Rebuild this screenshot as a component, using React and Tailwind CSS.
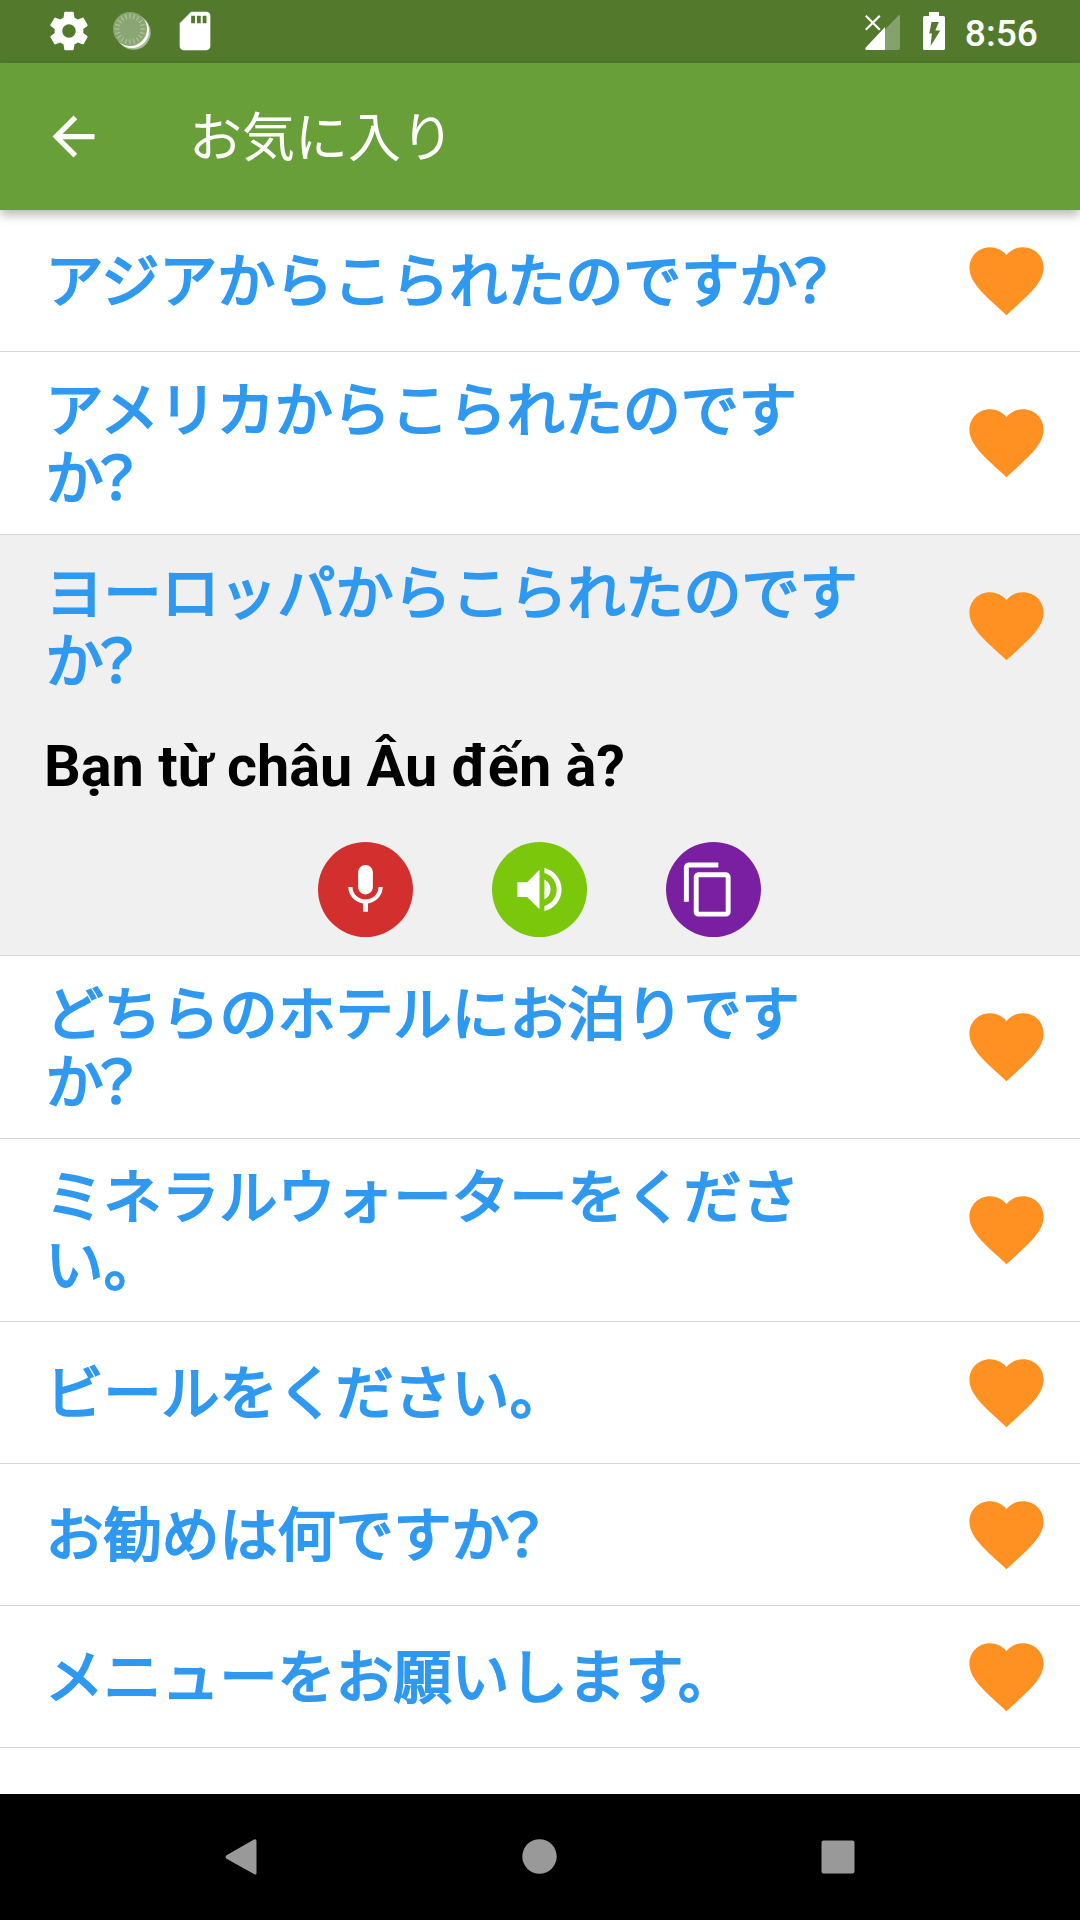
const HEART =
  "M12 21.35l-1.45-1.32C5.4 15.36 2 12.28 2 8.5 2 5.42 4.42 3 7.5 3c1.74 0 3.41.81 4.5 2.09C13.09 3.81 14.76 3 16.5 3 19.58 3 22 5.42 22 8.5c0 3.78-3.4 6.86-8.55 11.54L12 21.35z";
const MIC =
  "M12 14c1.66 0 2.99-1.34 2.99-3L15 5c0-1.66-1.34-3-3-3S9 3.34 9 5v6c0 1.66 1.34 3 3 3zm5.3-3c0 3-2.54 5.1-5.3 5.1S6.7 14 6.7 11H5c0 3.41 2.72 6.23 6 6.72V21h2v-3.28c3.28-.48 6-3.3 6-6.72h-1.7z";
const VOLUME =
  "M3 9v6h4l5 5V4L7 9H3zm13.5 3c0-1.77-1.02-3.29-2.5-4.03v8.05c1.48-.73 2.5-2.25 2.5-4.02zM14 3.23v2.06c2.89.86 5 3.54 5 6.71s-2.11 5.85-5 6.71v2.06c4.01-.91 7-4.49 7-8.77s-2.99-7.86-7-8.77z";
const COPY =
  "M16 1H4c-1.1 0-2 .9-2 2v14h2V3h12V1zm3 4H8c-1.1 0-2 .9-2 2v14c0 1.1.9 2 2 2h11c1.1 0 2-.9 2-2V7c0-1.1-.9-2-2-2zm0 16H8V7h11v14z";
const GEAR =
  "M19.43 12.98c.04-.32.07-.64.07-.98s-.03-.66-.07-.98l2.11-1.65c.19-.15.24-.42.12-.64l-2-3.46c-.12-.22-.39-.3-.61-.22l-2.49 1c-.52-.4-1.08-.73-1.69-.98l-.38-2.65C14.46 2.18 14.25 2 14 2h-4c-.25 0-.46.18-.49.42l-.38 2.65c-.61.25-1.17.59-1.69.98l-2.49-1c-.23-.09-.49 0-.61.22l-2 3.46c-.13.22-.07.49.12.64l2.11 1.65c-.04.32-.07.65-.07.98s.03.66.07.98l-2.11 1.65c-.19.15-.24.42-.12.64l2 3.46c.12.22.39.3.61.22l2.49-1c.52.4 1.08.73 1.69.98l.38 2.65c.03.24.24.42.49.42h4c.25 0 .46-.18.49-.42l.38-2.65c.61-.25 1.17-.59 1.69-.98l2.49 1c.23.09.49 0 .61-.22l2-3.46c.12-.22.07-.49-.12-.64l-2.11-1.65zM12 15.5c-1.93 0-3.5-1.57-3.5-3.5s1.57-3.5 3.5-3.5 3.5 1.57 3.5 3.5-1.57 3.5-3.5 3.5z";
const SD_CARD =
  "M18 2h-8L4.02 8 4 20c0 1.1.9 2 2 2h12c1.1 0 2-.9 2-2V4c0-1.1-.9-2-2-2zm-6 6h-2V4h2v4zm3 0h-2V4h2v4zm3 0h-2V4h2v4z";
const BACK = "M20 11H7.83l5.59-5.59L12 4l-8 8 8 8 1.41-1.41L7.83 13H20v-2z";

const TICKS = Array.from({ length: 20 }, (_, i) => i * 18);

function Icon({ d, className }) {
  return (
    <svg viewBox="0 0 24 24" fill="currentColor" className={className}>
      <path d={d} />
    </svg>
  );
}

function StatusBar() {
  return (
    <div className="flex h-[63px] items-start justify-between bg-[#52792c] pr-[42px] pl-[45px] text-white">
      <div className="flex pt-[8px]">
        <Icon d={GEAR} className="ml-[0.5px] h-[46px] w-[46px]" />
        <svg viewBox="0 0 38 38" className="mt-[4px] ml-[21px] h-[38px] w-[38px]">
          <circle cx="20.500" cy="20.500" r="17.200" fill="#a9bf96" />
          <circle cx="19" cy="19" r="17" fill="#fff" />
          <circle cx="17" cy="17" r="17" fill="#8ba673" />
          <g stroke="#b4c6a4" strokeWidth="1">
            {TICKS.map((a) => (
              <line key={a} x1="17" y1="1.5" x2="17" y2="6.5" transform={`rotate(${a} 17 17)`} />
            ))}
          </g>
        </svg>
        <Icon d={SD_CARD} className="ml-[21px] h-[46px] w-[46px]" />
      </div>
      <div className="flex">
        <svg viewBox="0 0 36 36" className="mt-[14px] h-[36px] w-[36px]">
          <path d="M35 2v32q0 2-2 2H20V15.500L33.500 1.500Q35 .5 35 2z" fill="#86a26c" />
          <path d="M20 13v23H1.500Q-.5 36 .8 33.500L20 13z" fill="#fff" />
          <path d="M.8 1.800l14 14M14.800 1.800l-14 14" stroke="#fff" strokeWidth="2.200" fill="none" />
        </svg>
        <svg viewBox="0 0 22 38" className="mt-[12px] ml-[22px] h-[38px] w-[22px]">
          <path
            fill="#fff"
            fillRule="evenodd"
            d="M6 0h10v4h4.500Q22 4 22 5.500v31q0 1.500-1.500 1.500h-19Q0 38 0 36.500v-31Q0 4 1.500 4H6zM8.500 10L6.300 21.500h2.600L7.600 34 17.300 18.500h-5L15.800 10z"
          />
        </svg>
        <span className="mt-[10px] ml-[20px] text-[37.2px] leading-[46px] font-medium">8:56</span>
      </div>
    </div>
  );
}

function AppBar() {
  return (
    <header className="relative flex h-[147px] items-center bg-[#689f38] pl-[42px] text-white shadow-[0_5px_10px_rgba(0,0,0,0.28)]">
      <Icon d={BACK} className="h-[63px] w-[63px]" />
      <h1 className="mt-[5px] ml-[84px] text-[53px] leading-[62px] font-normal">お気に入り</h1>
    </header>
  );
}

function Phrase({ text, question, tall }) {
  return (
    <div className="flex items-center justify-between pr-[29px] pl-[45.6px]">
      <p
        className={
          tall
            ? "h-[182px] w-[820px] pt-[20px] font-['Noto_Sans_CJK_JP',sans-serif] text-[58px] leading-[68px] text-[#2f99f1] [-webkit-text-stroke:2.2px_#2f99f1]"
            : "h-[141px] w-[820px] pt-[33px] font-['Noto_Sans_CJK_JP',sans-serif] text-[58px] leading-[68px] text-[#2f99f1] [-webkit-text-stroke:2.2px_#2f99f1]"
        }
      >
        {text}
        {question && <span className="-ml-[8px] [font-feature-settings:'palt']">？</span>}
      </p>
      <Icon
        d={HEART}
        className={
          tall
            ? "mb-px h-[89px] w-[89px] shrink-0 text-[#ff9122]"
            : "h-[89px] w-[89px] shrink-0 text-[#ff9122]"
        }
      />
    </div>
  );
}

function Actions() {
  return (
    <div className="flex justify-center gap-[79px] pr-px">
      <button className="flex h-[95px] w-[95px] items-center justify-center rounded-full bg-[#d32f2f]">
        <Icon d={MIC} className="h-[59px] w-[59px]" />
      </button>
      <button className="flex h-[95px] w-[95px] items-center justify-center rounded-full bg-[#7ac70c]">
        <Icon d={VOLUME} className="h-[59px] w-[59px]" />
      </button>
      <button className="flex h-[95px] w-[95px] items-center justify-center rounded-full bg-[#7b1fa2] pr-[10px]">
        <Icon d={COPY} className="h-[59px] w-[59px] shrink-0" />
      </button>
    </div>
  );
}

const ROWS = [
  { text: "アジアからこられたのですか", question: true },
  { text: "アメリカからこられたのですか", question: true, tall: true },
  {
    text: "ヨーロッパからこられたのですか",
    question: true,
    tall: true,
    translation: "Bạn từ châu Âu đến à?",
  },
  { text: "どちらのホテルにお泊りですか", question: true, tall: true },
  { text: "ミネラルウォーターをください。", tall: true },
  { text: "ビールをください。" },
  { text: "お勧めは何ですか", question: true },
  { text: "メニューをお願いします。" },
];

export default function App() {
  return (
    <div
      lang="ja"
      className="flex h-[1920px] w-[1080px] flex-col overflow-hidden bg-white font-[Roboto,'Noto_Sans_CJK_JP',sans-serif]"
    >
      <StatusBar />
      <AppBar />
      <ul className="flex-1">
        {ROWS.map((row) =>
          row.translation ? (
            <li key={row.text} className="h-[421px] border-b border-[#d6d6d6] bg-[#f0f0f0] text-white">
              <Phrase {...row} />
              <p className="mt-[16px] mb-[41px] pl-[44px] text-[57.6px] leading-[68px] font-bold text-black">
                {row.translation}
              </p>
              <Actions />
            </li>
          ) : (
            <li key={row.text} className="border-b border-[#d6d6d6]">
              <Phrase {...row} />
            </li>
          )
        )}
      </ul>
      <nav className="flex h-[126px] items-center justify-between bg-black px-[220px] text-[#999]">
        <svg viewBox="0 0 40 40" className="h-[40px] w-[40px]" fill="currentColor">
          <path d="M34 2.500Q36.500 1.500 36.500 4V36Q36.500 38.500 34 37L6.500 21.800Q4.500 20 6.500 18.200z" />
        </svg>
        <svg viewBox="0 0 40 40" className="h-[40px] w-[40px]" fill="currentColor">
          <circle cx="19.500" cy="19.500" r="17.200" />
        </svg>
        <svg viewBox="0 0 40 40" className="h-[40px] w-[40px]" fill="currentColor">
          <rect x="1.500" y="3.500" width="33" height="33" rx="2" />
        </svg>
      </nav>
    </div>
  );
}
